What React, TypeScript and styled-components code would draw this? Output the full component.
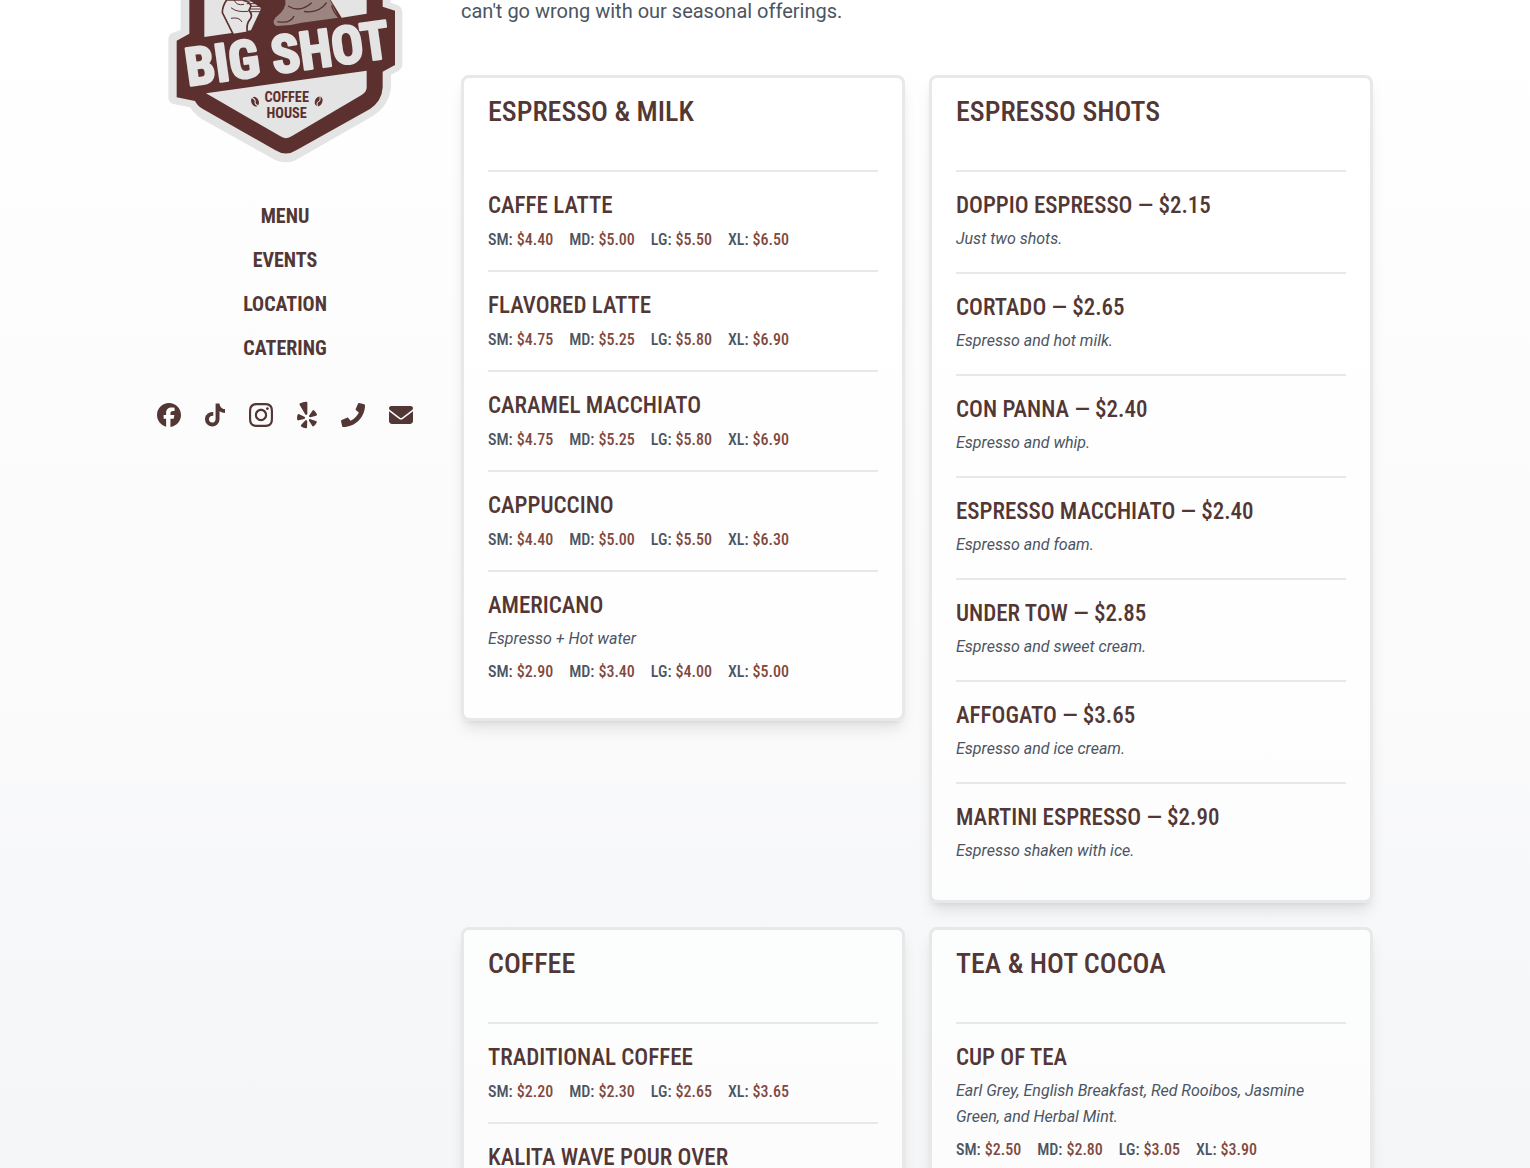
import React from "react";
import styled, { createGlobalStyle } from "styled-components";
import { FaPhone } from "react-icons/fa";
import { FaEnvelope, FaFacebook, FaInstagram, FaTiktok, FaYelp } from "react-icons/fa6";

const display = `"Roboto Condensed", "Liberation Sans Narrow", "DejaVu Sans Condensed", sans-serif`;
const body = `Roboto, "Liberation Sans", sans-serif`;

const colors = {
  coffee: "#523735",
  logo: "#5c302e",
  cream: "#e5e4e4",
  price: "#804940",
  slate: "#4b5563",
  line: "#e8e8e8",
};

const GlobalStyle = createGlobalStyle`
  *, *::before, *::after { box-sizing: border-box; }
  body { margin: 0; font-family: ${body}; color: ${colors.slate}; }
  h2, h3, p, ul, dl, dd { margin: 0; padding: 0; }
  ul { list-style: none; }
`;

const Page = styled.div`
  height: 100vh;
  overflow: hidden;
  background: linear-gradient(#ffffff, #fafafa 62%, #f7f8fa 75%, #f4f6f8);
`;

const Shell = styled.div`
  max-width: 1280px;
  margin: 0 auto;
  padding: 0 32px;
  display: grid;
  grid-template-columns: 256px minmax(0, 1fr);
  gap: 48px;
`;

const Sidebar = styled.aside`
  display: flex;
  flex-direction: column;
`;

const Logo = styled.svg`
  display: block;
  width: 100%;
`;

const Nav = styled.nav`
  display: flex;
  flex-direction: column;
  align-items: center;
  margin-top: 30px;
`;

const NavLink = styled.a`
  font: 700 20px/44px ${display};
  color: ${colors.coffee};
  text-decoration: none;
  text-transform: uppercase;
`;

const Social = styled.div`
  display: flex;
  justify-content: space-between;
  align-items: center;
  margin-top: 31px;
`;

const SocialLink = styled.a<{ $width: number }>`
  display: flex;
  color: ${colors.coffee};

  svg {
    width: ${(p) => p.$width}px;
    height: 28px;
  }
`;

const Intro = styled.p`
  font-size: 20px;
  line-height: 23px;
  margin-bottom: 52px;
`;

const Cards = styled.div`
  display: grid;
  grid-template-columns: repeat(2, minmax(0, 1fr));
  align-items: start;
  gap: 24px;
`;

const Card = styled.section`
  padding: 16px 24px;
  background: rgba(255, 255, 255, 0.7);
  border: 3px solid ${colors.line};
  border-radius: 8px;
  box-shadow: 0 10px 15px -3px rgba(0, 0, 0, 0.1), 0 4px 6px -4px rgba(0, 0, 0, 0.1);
`;

const CardTitle = styled.h2`
  font: 500 28px/36px ${display};
  color: ${colors.coffee};
  text-transform: uppercase;
  margin-bottom: 40px;
`;

const Item = styled.li`
  display: flex;
  flex-direction: column;
  gap: 2px;
  padding: 16px 0;
  border-top: 2px solid ${colors.line};
`;

const ItemName = styled.h3`
  font: 500 23px/36px ${display};
  color: ${colors.coffee};
  text-transform: uppercase;
`;

const Description = styled.p`
  font-size: 16px;
  font-style: italic;
  line-height: 26px;
  padding-bottom: 4px;
`;

const Prices = styled.dl`
  display: flex;
  gap: 16px;
  font: 500 16px/28px ${display};
`;

const Price = styled.div`
  display: flex;
  gap: 4px;

  dd {
    color: ${colors.price};
  }
`;

type Drink = { name: string; note?: string; prices?: string[] };
type Section = { title: string; drinks: Drink[] };

const sizes = ["SM", "MD", "LG", "XL"];

const sections: Section[] = [
  {
    title: "Espresso & Milk",
    drinks: [
      { name: "Caffe Latte", prices: ["4.40", "5.00", "5.50", "6.50"] },
      { name: "Flavored Latte", prices: ["4.75", "5.25", "5.80", "6.90"] },
      { name: "Caramel Macchiato", prices: ["4.75", "5.25", "5.80", "6.90"] },
      { name: "Cappuccino", prices: ["4.40", "5.00", "5.50", "6.30"] },
      { name: "Americano", note: "Espresso + Hot water", prices: ["2.90", "3.40", "4.00", "5.00"] },
    ],
  },
  {
    title: "Espresso Shots",
    drinks: [
      { name: "Doppio Espresso — $2.15", note: "Just two shots." },
      { name: "Cortado — $2.65", note: "Espresso and hot milk." },
      { name: "Con Panna — $2.40", note: "Espresso and whip." },
      { name: "Espresso Macchiato — $2.40", note: "Espresso and foam." },
      { name: "Under Tow — $2.85", note: "Espresso and sweet cream." },
      { name: "Affogato — $3.65", note: "Espresso and ice cream." },
      { name: "Martini Espresso — $2.90", note: "Espresso shaken with ice." },
    ],
  },
  {
    title: "Coffee",
    drinks: [
      { name: "Traditional Coffee", prices: ["2.20", "2.30", "2.65", "3.65"] },
      { name: "Kalita Wave Pour Over" },
    ],
  },
  {
    title: "Tea & Hot Cocoa",
    drinks: [
      {
        name: "Cup of Tea",
        note: "Earl Grey, English Breakfast, Red Rooibos, Jasmine Green, and Herbal Mint.",
        prices: ["2.50", "2.80", "3.05", "3.90"],
      },
    ],
  },
];

const socials = [
  { label: "Facebook", Icon: FaFacebook, width: 24 },
  { label: "TikTok", Icon: FaTiktok, width: 20 },
  { label: "Instagram", Icon: FaInstagram, width: 24 },
  { label: "Yelp", Icon: FaYelp, width: 20 },
  { label: "Phone", Icon: FaPhone, width: 24 },
  { label: "Email", Icon: FaEnvelope, width: 24 },
];

function Bean({ x, y }: { x: number; y: number }) {
  return (
    <g transform={`translate(${x} ${y}) rotate(${x < 380 ? -25 : 25})`}>
      <ellipse rx="11" ry="15" fill={colors.logo} />
      <path d="M-3-15Q5-4 0 1T3 15" fill="none" stroke={colors.cream} strokeWidth="3" />
    </g>
  );
}

function BigShotLogo() {
  return (
    <Logo viewBox="-9 0 768 492" role="img" aria-label="Big Shot Coffee House">
      <path
        fill={colors.cream}
        d="M62 0V90L37 99Q25 104 25 118V292Q25 308 40 312L90 322Q105 345 125 357L335 474Q378 500 418 474L640 347Q688 315 693 262V224L716 212Q727 206 727 190V38Q727 22 712 15L692 8V0Z"
      />
      <path
        fill={colors.logo}
        d="M88 0V101L50 122V292L105 303Q112 318 130 328L345 450Q378 471 410 450L630 327Q666 303 668 262V215L705 195V32L668 20V0Z"
      />
      <path fill={colors.cream} d="M133 0H268L308 28V86L133 111ZM512 0H620V41L545 53Z" />
      <path
        fill={colors.cream}
        stroke={colors.logo}
        strokeWidth="5"
        d="M200 0Q187 18 187 38L220 104L262 97Q258 72 270 58Q280 45 267 31L273 18Q270 6 250 0Z"
      />
      <path
        fill="none"
        stroke={colors.logo}
        strokeWidth="3"
        d="M222 0Q230 18 252 13M213 23Q230 38 265 34M213 55Q238 50 246 66M250 3H312M260 11H312M270 19H312M270 27H312M268 35H312"
      />
      <path fill={colors.logo} d="M306 20L270 97L346 88V0H306Z" />
      <path fill="#9b8580" d="M376 0Q382 26 346 53Q334 72 350 78L392 75L425 68L535 53Q520 20 510 0Z" />
      <path
        fill="none"
        stroke={colors.logo}
        strokeWidth="4"
        d="M384 18Q420 40 455 8M352 65Q392 72 402 48M432 34Q475 42 500 8M515 16Q520 36 536 53"
      />
      <g fill={colors.cream} stroke={colors.cream} strokeWidth="7" strokeLinejoin="round" fontFamily={display} fontWeight="700">
        <text x="84" y="258" fontSize="158" transform="rotate(-8 84 258)">
          BIG SHOT
        </text>
      </g>
      <path fill={colors.cream} d="M138 280L620 212V262Q620 276 606 284L396 408Q378 421 360 408Z" />
      <g fill={colors.logo} fontFamily={display} fontWeight="700" fontSize="43" textAnchor="middle">
        <text x="380" y="306">COFFEE</text>
        <text x="380" y="354">HOUSE</text>
      </g>
      <Bean x={285} y={305} />
      <Bean x={476} y={304} />
    </Logo>
  );
}

export default function App() {
  return (
    <Page>
      <GlobalStyle />
      <Shell>
        <Sidebar>
          <BigShotLogo />
          <Nav>
            {["Menu", "Events", "Location", "Catering"].map((name) => (
              <NavLink key={name} href={`#${name.toLowerCase()}`}>
                {name}
              </NavLink>
            ))}
          </Nav>
          <Social>
            {socials.map(({ label, Icon, width }) => (
              <SocialLink key={label} href={`#${label.toLowerCase()}`} aria-label={label} $width={width}>
                <Icon />
              </SocialLink>
            ))}
          </Social>
        </Sidebar>
        <main>
          <Intro>can't go wrong with our seasonal offerings.</Intro>
          <Cards>
            {sections.map((section) => (
              <Card key={section.title}>
                <CardTitle>{section.title}</CardTitle>
                <ul>
                  {section.drinks.map((drink) => (
                    <Item key={drink.name}>
                      <ItemName>{drink.name}</ItemName>
                      {drink.note && <Description>{drink.note}</Description>}
                      {drink.prices && (
                        <Prices>
                          {drink.prices.map((price, i) => (
                            <Price key={sizes[i]}>
                              <dt>{sizes[i]}:</dt>
                              <dd>${price}</dd>
                            </Price>
                          ))}
                        </Prices>
                      )}
                    </Item>
                  ))}
                </ul>
              </Card>
            ))}
          </Cards>
        </main>
      </Shell>
    </Page>
  );
}
